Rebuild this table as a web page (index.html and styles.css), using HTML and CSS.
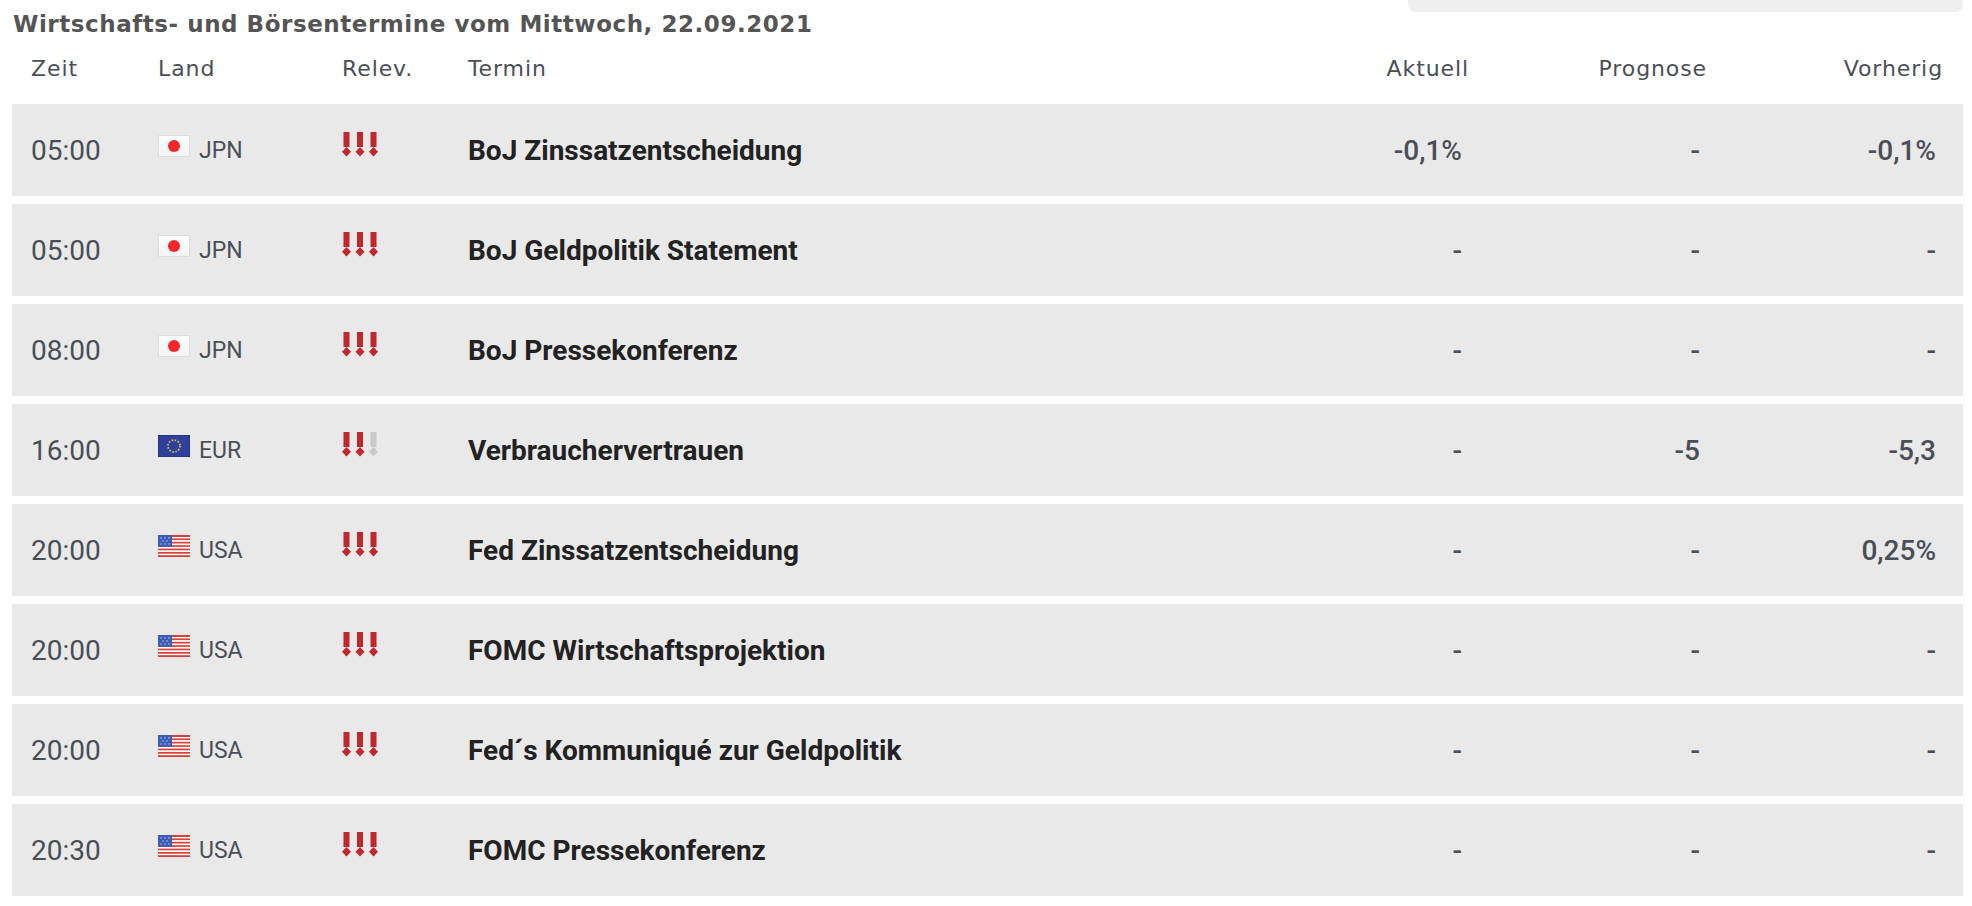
FILE: index.html
```html
<!DOCTYPE html>
<html lang="de">
<head>
<meta charset="utf-8">
<title>Wirtschafts- und Börsentermine</title>
<link rel="stylesheet" href="styles.css">
</head>
<body>
<div class="page">
  <div class="topbox"></div>
  <h1 class="title">Wirtschafts- und Börsentermine vom Mittwoch, 22.09.2021</h1>
  <div class="grid head">
    <div>Zeit</div>
    <div>Land</div>
    <div>Relev.</div>
    <div>Termin</div>
    <div class="num">Aktuell</div>
    <div class="num">Prognose</div>
    <div class="num">Vorherig</div>
  </div>

  <div class="rows">
    <div class="grid row">
      <div class="time">05:00</div>
      <div class="land"><span class="flag jp"><i></i></span><span class="code">JPN</span></div>
      <div class="rel"><svg viewBox="0 0 36 25" class="relicon"><g class="on"><rect x="1.5" y="0" width="6" height="15"/><path d="M4.5 15 9 19.7 4.5 24.5 0 19.7Z"/><rect x="15" y="0" width="6" height="15"/><path d="M18 15 22.5 19.7 18 24.5 13.5 19.7Z"/><rect x="28.5" y="0" width="6" height="15"/><path d="M31.5 15 36 19.7 31.5 24.5 27 19.7Z"/></g></svg></div>
      <div class="termin">BoJ Zinssatzentscheidung</div>
      <div class="val">-0,1%</div>
      <div class="val">-</div>
      <div class="val">-0,1%</div>
    </div>

    <div class="grid row">
      <div class="time">05:00</div>
      <div class="land"><span class="flag jp"><i></i></span><span class="code">JPN</span></div>
      <div class="rel"><svg viewBox="0 0 36 25" class="relicon"><g class="on"><rect x="1.5" y="0" width="6" height="15"/><path d="M4.5 15 9 19.7 4.5 24.5 0 19.7Z"/><rect x="15" y="0" width="6" height="15"/><path d="M18 15 22.5 19.7 18 24.5 13.5 19.7Z"/><rect x="28.5" y="0" width="6" height="15"/><path d="M31.5 15 36 19.7 31.5 24.5 27 19.7Z"/></g></svg></div>
      <div class="termin">BoJ Geldpolitik Statement</div>
      <div class="val">-</div>
      <div class="val">-</div>
      <div class="val">-</div>
    </div>

    <div class="grid row">
      <div class="time">08:00</div>
      <div class="land"><span class="flag jp"><i></i></span><span class="code">JPN</span></div>
      <div class="rel"><svg viewBox="0 0 36 25" class="relicon"><g class="on"><rect x="1.5" y="0" width="6" height="15"/><path d="M4.5 15 9 19.7 4.5 24.5 0 19.7Z"/><rect x="15" y="0" width="6" height="15"/><path d="M18 15 22.5 19.7 18 24.5 13.5 19.7Z"/><rect x="28.5" y="0" width="6" height="15"/><path d="M31.5 15 36 19.7 31.5 24.5 27 19.7Z"/></g></svg></div>
      <div class="termin">BoJ Pressekonferenz</div>
      <div class="val">-</div>
      <div class="val">-</div>
      <div class="val">-</div>
    </div>

    <div class="grid row">
      <div class="time">16:00</div>
      <div class="land"><span class="flag eu"><svg viewBox="0 0 32 22"><circle cx="16" cy="11" r="6" fill="none" stroke="#e0c040" stroke-width="1.8" stroke-dasharray="1.5 1.64"/></svg></span><span class="code">EUR</span></div>
      <div class="rel"><svg viewBox="0 0 36 25" class="relicon"><g class="on"><rect x="1.5" y="0" width="6" height="15"/><path d="M4.5 15 9 19.7 4.5 24.5 0 19.7Z"/><rect x="15" y="0" width="6" height="15"/><path d="M18 15 22.5 19.7 18 24.5 13.5 19.7Z"/></g><g class="off"><rect x="28.5" y="0" width="6" height="15"/><path d="M31.5 15 36 19.7 31.5 24.5 27 19.7Z"/></g></svg></div>
      <div class="termin">Verbrauchervertrauen</div>
      <div class="val">-</div>
      <div class="val">-5</div>
      <div class="val">-5,3</div>
    </div>

    <div class="grid row">
      <div class="time">20:00</div>
      <div class="land"><span class="flag us"><svg viewBox="0 0 32 22"><rect width="32" height="22" fill="#fff"/><g fill="#d8403a"><rect y="0" width="32" height="2"/><rect y="3.4" width="32" height="1.7"/><rect y="6.8" width="32" height="1.7"/><rect y="10.2" width="32" height="1.7"/><rect y="13.6" width="32" height="1.7"/><rect y="17" width="32" height="1.7"/><rect y="20.2" width="32" height="1.8"/></g><rect width="14" height="11.8" fill="#3d5bb5"/><g fill="#b9c6f0"><circle cx="3" cy="3" r=".8"/><circle cx="7" cy="3" r=".8"/><circle cx="11" cy="3" r=".8"/><circle cx="5" cy="6" r=".8"/><circle cx="9" cy="6" r=".8"/><circle cx="3" cy="9" r=".8"/><circle cx="7" cy="9" r=".8"/><circle cx="11" cy="9" r=".8"/></g></svg></span><span class="code">USA</span></div>
      <div class="rel"><svg viewBox="0 0 36 25" class="relicon"><g class="on"><rect x="1.5" y="0" width="6" height="15"/><path d="M4.5 15 9 19.7 4.5 24.5 0 19.7Z"/><rect x="15" y="0" width="6" height="15"/><path d="M18 15 22.5 19.7 18 24.5 13.5 19.7Z"/><rect x="28.5" y="0" width="6" height="15"/><path d="M31.5 15 36 19.7 31.5 24.5 27 19.7Z"/></g></svg></div>
      <div class="termin">Fed Zinssatzentscheidung</div>
      <div class="val">-</div>
      <div class="val">-</div>
      <div class="val">0,25%</div>
    </div>

    <div class="grid row">
      <div class="time">20:00</div>
      <div class="land"><span class="flag us"><svg viewBox="0 0 32 22"><rect width="32" height="22" fill="#fff"/><g fill="#d8403a"><rect y="0" width="32" height="2"/><rect y="3.4" width="32" height="1.7"/><rect y="6.8" width="32" height="1.7"/><rect y="10.2" width="32" height="1.7"/><rect y="13.6" width="32" height="1.7"/><rect y="17" width="32" height="1.7"/><rect y="20.2" width="32" height="1.8"/></g><rect width="14" height="11.8" fill="#3d5bb5"/><g fill="#b9c6f0"><circle cx="3" cy="3" r=".8"/><circle cx="7" cy="3" r=".8"/><circle cx="11" cy="3" r=".8"/><circle cx="5" cy="6" r=".8"/><circle cx="9" cy="6" r=".8"/><circle cx="3" cy="9" r=".8"/><circle cx="7" cy="9" r=".8"/><circle cx="11" cy="9" r=".8"/></g></svg></span><span class="code">USA</span></div>
      <div class="rel"><svg viewBox="0 0 36 25" class="relicon"><g class="on"><rect x="1.5" y="0" width="6" height="15"/><path d="M4.5 15 9 19.7 4.5 24.5 0 19.7Z"/><rect x="15" y="0" width="6" height="15"/><path d="M18 15 22.5 19.7 18 24.5 13.5 19.7Z"/><rect x="28.5" y="0" width="6" height="15"/><path d="M31.5 15 36 19.7 31.5 24.5 27 19.7Z"/></g></svg></div>
      <div class="termin">FOMC Wirtschaftsprojektion</div>
      <div class="val">-</div>
      <div class="val">-</div>
      <div class="val">-</div>
    </div>

    <div class="grid row">
      <div class="time">20:00</div>
      <div class="land"><span class="flag us"><svg viewBox="0 0 32 22"><rect width="32" height="22" fill="#fff"/><g fill="#d8403a"><rect y="0" width="32" height="2"/><rect y="3.4" width="32" height="1.7"/><rect y="6.8" width="32" height="1.7"/><rect y="10.2" width="32" height="1.7"/><rect y="13.6" width="32" height="1.7"/><rect y="17" width="32" height="1.7"/><rect y="20.2" width="32" height="1.8"/></g><rect width="14" height="11.8" fill="#3d5bb5"/><g fill="#b9c6f0"><circle cx="3" cy="3" r=".8"/><circle cx="7" cy="3" r=".8"/><circle cx="11" cy="3" r=".8"/><circle cx="5" cy="6" r=".8"/><circle cx="9" cy="6" r=".8"/><circle cx="3" cy="9" r=".8"/><circle cx="7" cy="9" r=".8"/><circle cx="11" cy="9" r=".8"/></g></svg></span><span class="code">USA</span></div>
      <div class="rel"><svg viewBox="0 0 36 25" class="relicon"><g class="on"><rect x="1.5" y="0" width="6" height="15"/><path d="M4.5 15 9 19.7 4.5 24.5 0 19.7Z"/><rect x="15" y="0" width="6" height="15"/><path d="M18 15 22.5 19.7 18 24.5 13.5 19.7Z"/><rect x="28.5" y="0" width="6" height="15"/><path d="M31.5 15 36 19.7 31.5 24.5 27 19.7Z"/></g></svg></div>
      <div class="termin">Fed´s Kommuniqué zur Geldpolitik</div>
      <div class="val">-</div>
      <div class="val">-</div>
      <div class="val">-</div>
    </div>

    <div class="grid row">
      <div class="time">20:30</div>
      <div class="land"><span class="flag us"><svg viewBox="0 0 32 22"><rect width="32" height="22" fill="#fff"/><g fill="#d8403a"><rect y="0" width="32" height="2"/><rect y="3.4" width="32" height="1.7"/><rect y="6.8" width="32" height="1.7"/><rect y="10.2" width="32" height="1.7"/><rect y="13.6" width="32" height="1.7"/><rect y="17" width="32" height="1.7"/><rect y="20.2" width="32" height="1.8"/></g><rect width="14" height="11.8" fill="#3d5bb5"/><g fill="#b9c6f0"><circle cx="3" cy="3" r=".8"/><circle cx="7" cy="3" r=".8"/><circle cx="11" cy="3" r=".8"/><circle cx="5" cy="6" r=".8"/><circle cx="9" cy="6" r=".8"/><circle cx="3" cy="9" r=".8"/><circle cx="7" cy="9" r=".8"/><circle cx="11" cy="9" r=".8"/></g></svg></span><span class="code">USA</span></div>
      <div class="rel"><svg viewBox="0 0 36 25" class="relicon"><g class="on"><rect x="1.5" y="0" width="6" height="15"/><path d="M4.5 15 9 19.7 4.5 24.5 0 19.7Z"/><rect x="15" y="0" width="6" height="15"/><path d="M18 15 22.5 19.7 18 24.5 13.5 19.7Z"/><rect x="28.5" y="0" width="6" height="15"/><path d="M31.5 15 36 19.7 31.5 24.5 27 19.7Z"/></g></svg></div>
      <div class="termin">FOMC Pressekonferenz</div>
      <div class="val">-</div>
      <div class="val">-</div>
      <div class="val">-</div>
    </div>
  </div>
</div>
</body>
</html>
```

FILE: styles.css
```css
html, body {
  margin: 0;
  padding: 0;
  background: #ffffff;
}

.page {
  padding: 0 9px 0 12px;
  font-family: Roboto, "Liberation Sans", sans-serif;
}

.topbox {
  height: 12px;
  width: 555px;
  margin-left: auto;
  background: #efefef;
  border-radius: 0 0 8px 8px;
}

.title {
  margin: 0;
  padding-left: 1px;
  font-family: "DejaVu Sans", Verdana, sans-serif;
  font-weight: bold;
  font-size: 23px;
  letter-spacing: 0.55px;
  line-height: 24px;
  color: #555555;
}

.grid {
  display: grid;
  grid-template-columns: 127px 184px 126px 801px 200px 238px 236px;
  padding: 0 20px 0 19px;
  align-items: center;
}

.head {
  padding-top: 18px;
  padding-bottom: 20px;
  height: 30px;
  font-family: "DejaVu Sans", Verdana, sans-serif;
  font-size: 22px;
  letter-spacing: 0.9px;
  line-height: 30px;
  color: #4a4f57;
}

.head .num {
  text-align: right;
}

.rows {
  display: flex;
  flex-direction: column;
  gap: 8px;
}

.row {
  height: 92px;
  background: #e9e9e9;
}

.time {
  font-size: 28px;
  color: #4a4f57;
}

.land {
  display: flex;
  align-items: center;
  gap: 9px;
}

.flag {
  display: block;
  width: 32px;
  height: 22px;
  position: relative;
  top: -4px;
}

.flag svg {
  display: block;
  width: 32px;
  height: 22px;
}

.flag.jp {
  background: linear-gradient(#ffffff, #f3f3f3);
  box-shadow: inset 0 0 0 1px #dddddd;
  display: flex;
  align-items: center;
  justify-content: center;
}

.flag.jp i {
  display: block;
  width: 12px;
  height: 12px;
  border-radius: 50%;
  background: #f4262b;
}

.flag.eu {
  background: #2e3f9c;
  box-shadow: inset 0 0 0 1px #24347e;
}

.code {
  font-size: 23px;
  color: #4a4f57;
}

.rel {
  display: flex;
}

.relicon {
  display: block;
  width: 36px;
  height: 25px;
  position: relative;
  top: -6px;
}

.relicon .on {
  fill: #c1272d;
}

.relicon .off {
  fill: #cacaca;
}

.termin {
  font-size: 28px;
  font-weight: bold;
  color: #222222;
}

.val {
  text-align: right;
  padding-right: 7px;
  font-size: 28px;
  font-weight: 500;
  color: #4a4f57;
}
```
